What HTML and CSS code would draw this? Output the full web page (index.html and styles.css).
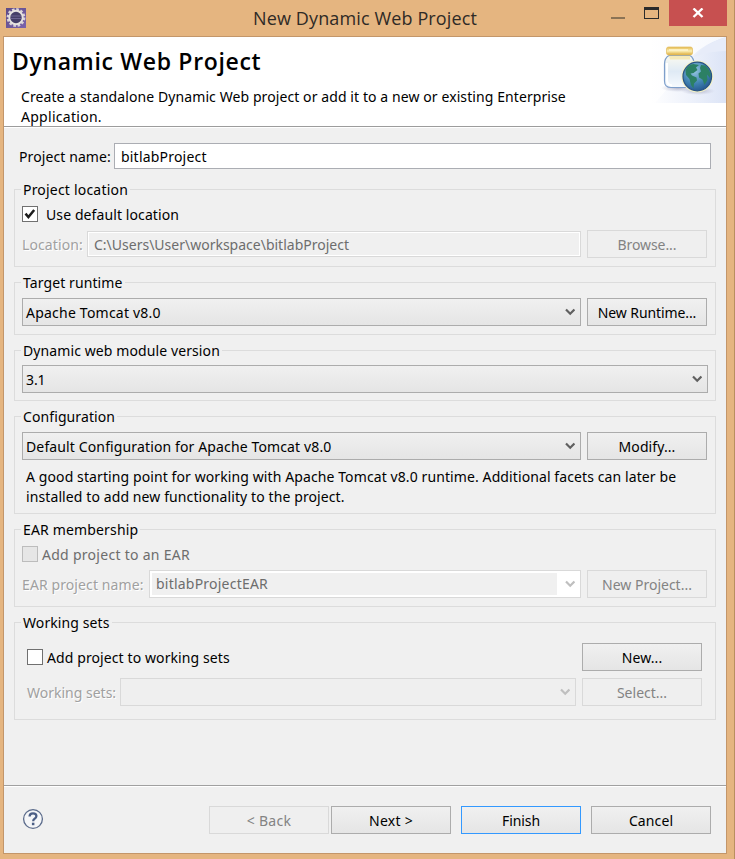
FILE: index.html
```html
<!DOCTYPE html>
<html lang="en">
<head>
<meta charset="utf-8">
<title>New Dynamic Web Project</title>
<link rel="stylesheet" href="styles.css">
</head>
<body>
<svg class="defs" width="0" height="0" aria-hidden="true">
  <symbol id="chevron" viewBox="0 0 10 8"><path d="M1 1.500L5.200 5.700L9.400 1.500" fill="none" stroke="currentColor" stroke-width="2.200"/></symbol>
</svg>
<div class="window">
  <header class="titlebar">
    <svg class="app-icon" viewBox="0 0 20 20" width="20" height="20">
      <defs><linearGradient id="iconbg" x1="0" y1="0" x2="1" y2="1"><stop offset="0" stop-color="#5d4a86"/><stop offset="1" stop-color="#7b63ad"/></linearGradient></defs>
      <rect width="20" height="20" fill="url(#iconbg)"/>
      <circle cx="10" cy="9.500" r="8.200" fill="none" stroke="#d9d3d6" stroke-width="2.400" stroke-dasharray="2.600 1.694"/>
      <circle cx="10" cy="9.500" r="6.700" fill="#453e68" stroke="#e6e2e0" stroke-width="2"/>
      <path d="M5 8h10M4.600 10.500h10.800" stroke="#6c6391" stroke-width="1"/>
    </svg>
    <h1 class="window-title">New Dynamic Web Project</h1>
    <div class="controls">
      <span class="minimize"></span>
      <span class="maximize"></span>
      <span class="close"><svg viewBox="0 0 12 10" width="12" height="10"><path d="M1.500 .5L10.500 9M10.500 .5L1.500 9" stroke="#fff" stroke-width="2.400"/></svg></span>
    </div>
  </header>
  <main class="client">
    <section class="banner">
      <div class="banner-text">
        <h2>Dynamic Web Project</h2>
        <p>Create a standalone Dynamic Web project or add it to a new or existing Enterprise<br><span class="loose">Application.</span></p>
      </div>
      <svg class="banner-art" viewBox="0 0 76 66" width="76" height="66">
        <defs>
          <linearGradient id="sky" x1="0" y1="0" x2="1" y2="0"><stop offset="0" stop-color="#fff"/><stop offset=".55" stop-color="#edf1fb"/><stop offset="1" stop-color="#dce4f6"/></linearGradient>
          <linearGradient id="arc" x1="0" y1="0" x2="1" y2="0"><stop offset="0" stop-color="#fff"/><stop offset="1" stop-color="#f6f8fd"/></linearGradient>
          <linearGradient id="lid" x1="0" y1="0" x2="0" y2="1"><stop offset="0" stop-color="#e3b84c"/><stop offset=".5" stop-color="#fbeeb4"/><stop offset="1" stop-color="#dda935"/></linearGradient>
          <linearGradient id="glass" x1="0" y1="0" x2="0" y2="1"><stop offset="0" stop-color="#fbfaf0"/><stop offset=".5" stop-color="#dfeaf5"/><stop offset="1" stop-color="#f6fafe"/></linearGradient>
          <radialGradient id="sea" cx=".4" cy=".3" r=".75"><stop offset="0" stop-color="#98c8e2"/><stop offset=".6" stop-color="#3f82b2"/><stop offset="1" stop-color="#24568d"/></radialGradient>
          <radialGradient id="shade"><stop offset="0" stop-color="#a4a7c0" stop-opacity=".8"/><stop offset="1" stop-color="#b4b7cc" stop-opacity="0"/></radialGradient>
        </defs>
        <rect width="76" height="66" fill="url(#sky)"/>
        <path d="M0 0H76Q48 8 33 30Q18 52 5 66H0z" fill="url(#arc)"/>
        <path d="M44 20Q58 14 76 14V0Q58 5 44 20z" fill="#e7ecf9"/>
        <ellipse cx="28" cy="51" rx="17" ry="4" fill="url(#shade)"/>
        <ellipse cx="48" cy="54" rx="17" ry="4" fill="url(#shade)"/>
        <path d="M19 18.500Q14.500 21 14.500 27V44Q14.500 50.500 21 50.500H38Q44 50.500 44 44V27Q44 21 40 18.500z" fill="url(#glass)" stroke="#7e9fcb" stroke-width="1.200"/>
        <path d="M17 26V43Q17 48 22 48.500" fill="none" stroke="#fff" stroke-width="2"/>
        <path d="M19 19H40V22.500H20z" fill="#f5eaba"/>
        <rect x="16.500" y="10" width="26" height="8" rx="2" fill="url(#lid)" stroke="#e5c16a" stroke-width=".8"/>
        <path d="M19 13H38" stroke="#fff6cf" stroke-width="1.500"/>
        <circle cx="47.300" cy="39.500" r="16" fill="#f4f2c6"/>
        <circle cx="47.300" cy="39.500" r="14.300" fill="url(#sea)" stroke="#285283" stroke-width="1.200"/>
        <path d="M35.500 33Q38 27.500 43.500 27L49 28L46 30.500L47.500 33L43.500 36L40.500 36.500L42 38.500L46.500 40.500L47 43.500L44 46.500L43.500 51.500L41 48L39.500 42L36 38z" fill="#2c8064"/>
        <path d="M50 31L51 28L55.500 28.500Q59.500 32 60.800 37L60 41L57 37.500L57.500 43L54.500 48L52.500 42.500L49 40.500L48.500 36.500L51 34.500z" fill="#2c8064"/>
      </svg>
    </section>

    <section class="form">
      <div class="row name-row">
        <label class="name-label drop">Project name:</label>
        <div class="field name-field">bitlabProject</div>
      </div>

      <section class="group location">
        <h3>Project location</h3>
        <div class="row check-row">
          <span class="checkbox"><svg viewBox="0 0 14 14" width="14" height="14"><path d="M2.500 6.700L5.400 10L11.200 3" fill="none" stroke="#1c1c1c" stroke-width="2.500"/></svg></span>
          <label class="check-label drop wide-gap">Use default location</label>
        </div>
        <div class="row">
          <label class="etched drop location-label">Location:</label>
          <div class="field readonly location-field">C:\Users\User\workspace\bitlabProject</div>
          <div class="button disabled tight">Browse...</div>
        </div>
      </section>

      <section class="group runtime">
        <h3>Target runtime</h3>
        <div class="row">
          <div class="select"><span class="drop mid">Apache Tomcat v8.0</span><svg class="chevron"><use href="#chevron"/></svg></div>
          <div class="button tight">New Runtime...</div>
        </div>
      </section>

      <section class="group module">
        <h3>Dynamic web module version</h3>
        <div class="row">
          <div class="select"><span class="drop tight">3.1</span><svg class="chevron"><use href="#chevron"/></svg></div>
        </div>
      </section>

      <section class="group configuration">
        <h3>Configuration</h3>
        <div class="row">
          <div class="select"><span class="drop default-config">Default Configuration for Apache Tomcat v8.0</span><svg class="chevron"><use href="#chevron"/></svg></div>
          <div class="button">Modify...</div>
        </div>
        <p class="hint">A good starting point for working with Apache Tomcat v8.0 runtime. Additional facets can later be<br>installed to add new functionality to the project.</p>
      </section>

      <section class="group ear">
        <h3>EAR membership</h3>
        <div class="row check-row">
          <span class="checkbox off"></span>
          <label class="check-label drop muted loose">Add project to an EAR</label>
        </div>
        <div class="row">
          <label class="etched drop ear-label">EAR project name:</label>
          <div class="combo"><span class="combo-text mid">bitlabProjectEAR</span><svg class="chevron"><use href="#chevron"/></svg></div>
          <div class="button disabled snug">New Project...</div>
        </div>
      </section>

      <section class="group sets">
        <h3>Working sets</h3>
        <div class="row sets-row">
          <span class="checkbox"></span>
          <label class="check-label drop">Add project to working sets</label>
          <div class="button push">New...</div>
        </div>
        <div class="row">
          <label class="etched drop sets-label">Working sets:</label>
          <div class="select disabled"><span></span><svg class="chevron"><use href="#chevron"/></svg></div>
          <div class="button disabled snug">Select...</div>
        </div>
      </section>
    </section>

    <footer class="actions">
      <svg class="help" viewBox="0 0 22 22" width="22" height="22">
        <circle cx="11" cy="11" r="9.400" fill="#f5f6f8" stroke="#5b6b8b" stroke-width="1.300"/>
        <path d="M7.600 8.600Q7.600 5.400 11 5.400Q14.400 5.400 14.400 8.100Q14.400 9.800 12.600 10.800Q11.200 11.600 11.200 13.200" fill="none" stroke="#4c5f86" stroke-width="2.300"/>
        <rect x="9.900" y="14.700" width="2.500" height="2.500" fill="#4c5f86"/>
      </svg>
      <div class="button disabled back loose">&lt; Back</div>
      <div class="button next loose">Next &gt;</div>
      <div class="button primary tight">Finish</div>
      <div class="button cancel">Cancel</div>
    </footer>
  </main>
</div>
</body>
</html>
```
FILE: styles.css
```css
* { box-sizing: border-box; }

body {
  margin: 0;
  background: #e5b580;
  color: #000;
  font: 14px/20px "Noto Sans", "Open Sans", sans-serif;
  letter-spacing: .1px;
}

h1, h2, h3, p { margin: 0; font-size: inherit; font-weight: 400; }

.defs { position: absolute; }

.window {
  width: 735px;
  height: 859px;
  padding: 0 7px 5px 3px;
  border-right: 1px solid #b98f5f;
  background: #e5b580;
}

.titlebar { display: flex; height: 36px; }
.app-icon { flex: none; margin: 8px 0 0 3px; }
.window-title {
  width: 224px;
  margin: 5px auto 0 227px;
  color: #2f2a26;
  font: 18px/27px "Open Sans", "Noto Sans", sans-serif;
  letter-spacing: .13px;
  white-space: nowrap;
}
.controls { display: flex; height: 26px; }
.minimize { width: 14px; height: 2px; margin: 17px 19px 0 0; background: #8b7355; }
.maximize { width: 15px; height: 12px; margin: 7px 10px 0 0; border: 1px solid #2b2b2b; border-top-width: 3px; }
.close { display: flex; align-items: center; justify-content: center; width: 58px; height: 26px; background: #c75050; }

.client {
  display: flex;
  flex-direction: column;
  width: 724px;
  height: 818px;
  border: 1px solid #c3966a;
  background: #f0f0f0;
}

.banner {
  display: flex;
  justify-content: space-between;
  height: 90px;
  border-bottom: 1px solid #9c9c9c;
  background: #fff;
  box-shadow: 0 1px #fff;
}
.banner-text { padding: 7px 0 0 8px; white-space: nowrap; }
.banner-text h2 { font: 600 23px/34px "Open Sans", "Noto Sans", sans-serif; letter-spacing: .68px; }
.banner-text p { padding: 9px 0 0 9px; letter-spacing: .09px; }
.banner-art { flex: none; }

.form { flex: 1; padding: 16px 10px 0; }
.row { display: flex; align-items: center; white-space: nowrap; }

.name-row { margin: 0 5px 20px; }
.name-label { width: 95px; }
.field { height: 26px; padding-left: 6px; border: 1px solid #abadb3; background: #fff; line-height: 25px; }
.name-field { flex: 1; letter-spacing: .2px; }
.readonly { flex: 1; border-color: #d9d9d9; background: #f0f0f0; box-shadow: inset 0 0 0 1px #fff; color: #6d6d6d; letter-spacing: 0; }

.group { width: 702px; margin-bottom: 15px; padding: 0 8px 0 7px; border: 1px solid #dcdcdc; }
.group h3 {
  width: fit-content;
  margin: -10px 0 0 -1px;
  padding: 0 2px;
  background: #f0f0f0;
  white-space: nowrap;
}
.group .button { margin-left: 6px; }

/* one pixel lower than centred, level with the button captions */
.drop { padding-top: 1px; }
.select .drop, .etched.drop, .check-label.drop { padding-top: 2px; }

.location { height: 78px; }
.location h3 { letter-spacing: .2px; }
.location .check-row { height: 16px; margin: 6px 0 8px; }
.location-label { width: 65px; }

.runtime { height: 53px; }
.runtime .row, .configuration .row { margin-top: 5px; }
.module { height: 51px; }
.module .row { margin: 4px -1px 0 0; }
.configuration { height: 98px; }
.default-config { letter-spacing: .13px; }
.hint { margin-top: 7px; padding-left: 4px; white-space: nowrap; }

.ear { height: 78px; }
.ear .check-row { height: 16px; margin: 6px 0 8px; }
.ear-label { width: 127px; }
.ear h3 { letter-spacing: .16px; }

.sets { height: 98px; margin-bottom: 0; padding: 0 13px 0 12px; }
.sets h3 { margin-left: -6px; }
.sets-row { margin: 10px 0 7px; }
.sets-label { width: 93px; letter-spacing: 0; }

.checkbox { flex: none; width: 16px; height: 16px; border: 1px solid #707070; background: #fff; }
.checkbox svg { display: block; }
.checkbox.off { border-color: #bcbcbc; background: #e6e6e6; }
.check-label { margin-left: 4px; }
.wide-gap { margin-left: 8px; }
.muted { color: #6d6d6d; }
.etched { flex: none; color: #a0a0a0; text-shadow: 1px 1px #fff; }

.select {
  display: flex;
  flex: 1;
  align-items: center;
  justify-content: space-between;
  height: 28px;
  padding: 0 5px 0 3px;
  border: 1px solid #acacac;
  background: linear-gradient(#f0f0f0, #e5e5e5);
}
.chevron { flex: none; width: 10px; height: 8px; color: #606060; }
.disabled .chevron, .combo .chevron { color: #bfbfbf; }
.select.disabled { border-color: #d9d9d9; background: #efefef; }

.combo { display: flex; flex: 1; align-items: center; justify-content: space-between; height: 28px; padding: 0 5px 0 2px; border: 1px solid #d9d9d9; background: #fff; }
.combo-text { width: 405px; height: 22px; padding-left: 4px; background: #f0f0f0; color: #6d6d6d; line-height: 22px; }

.button {
  flex: none;
  width: 120px;
  height: 28px;
  border: 1px solid #acacac;
  background: linear-gradient(#f0f0f0, #e5e5e5);
  line-height: 27px;
  text-align: center;
  white-space: nowrap;
}
.button.disabled { border-color: #d9d9d9; background: #efefef; color: #838383; }
.button.primary { margin-left: 10px; border-color: #3399ff; }
.group .push { margin-left: auto; }

.actions { display: flex; height: 68px; padding: 20px 15px 0 18px; border-top: 1px solid #a0a0a0; box-shadow: inset 0 1px #fff; }
.help { margin-top: 2px; }
.back { margin-left: auto; }
.next { margin-left: 2px; }
.cancel { margin-left: 10px; }

.tight { letter-spacing: -.1px; }
.snug { letter-spacing: 0; }
.mid { letter-spacing: .22px; }
.loose { letter-spacing: .28px; }
```
